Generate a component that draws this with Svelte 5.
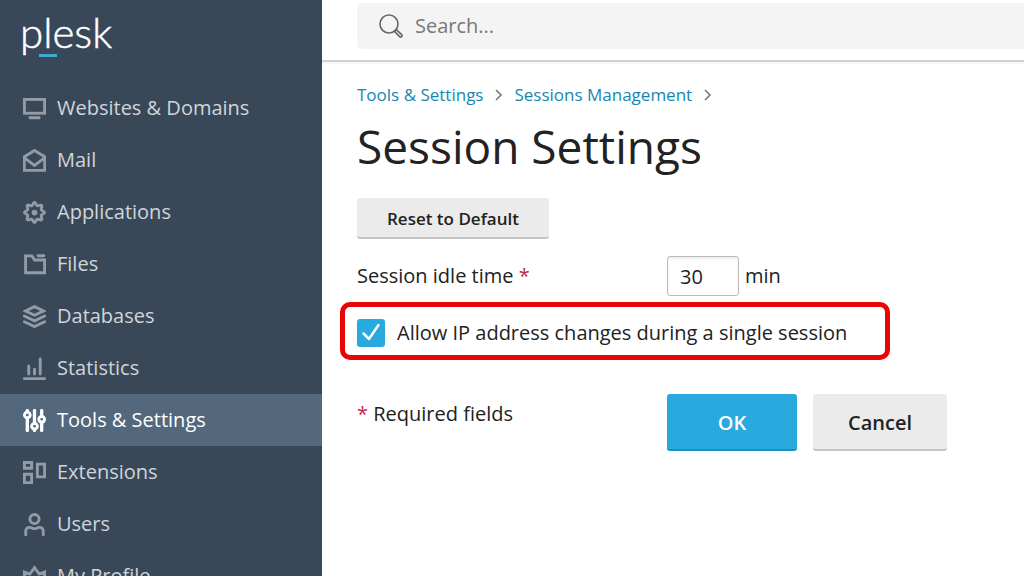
<script>
  const items = [
    { label: 'Websites & Domains', icon: 'monitor' },
    { label: 'Mail', icon: 'mail' },
    { label: 'Applications', icon: 'gear' },
    { label: 'Files', icon: 'folder' },
    { label: 'Databases', icon: 'layers' },
    { label: 'Statistics', icon: 'bars' },
    { label: 'Tools & Settings', icon: 'sliders' },
    { label: 'Extensions', icon: 'blocks' },
    { label: 'Users', icon: 'user' },
    { label: 'My Profile', icon: 'crown' }
  ];
  let active = $state('Tools & Settings');
  let query = $state('');
  let idle = $state('30');
  let allow = $state(true);

  function reset() {
    idle = '30';
    allow = true;
  }
</script>

{#snippet glyph(name)}
  <svg class="glyph" viewBox="0 0 16 16" aria-hidden="true">
    {#if name === 'monitor'}
      <rect x="1" y="1.7" width="14" height="9.6" />
      <path d="M4.8 14.4h6.4" stroke-linecap="round" />
    {:else if name === 'mail'}
      <path d="M.9 5.4 8 1l7.1 4.400v9.500H.900zM1 6.200l7 5.200 7-5.200" />
    {:else if name === 'gear'}
      <path d="M8 1c1 0 1 1.900 1.900 2.300S12.200 2.300 13 3s-.7 2.200-.3 3.100S15 7 15 8s-1.900 1-2.300 1.900S13.700 12.200 13 13s-2.200-.7-3.100-.3S9 15 8 15s-1-1.900-1.900-2.300S3.800 13.700 3 13s.7-2.200.3-3.100S1 9 1 8s1.900-1 2.300-1.900S2.300 3.800 3 3s2.200.7 3.100.3S7 1 8 1z" />
      <circle cx="8" cy="8" r="2" class="solid" />
    {:else if name === 'folder'}
      <path d="M1.800 13.700V2h4.400l1.900 2.900H15v8.800z" />
      <path d="M10.400 1.900H14.500" stroke-linecap="round" />
    {:else if name === 'layers'}
      <path d="M8 1.100 14.400 4.100 8 7.100 1.600 4.100z" />
      <path d="M.9 7.700 8 11l7.100-3.300M.9 11.700 8 15l7.100-3.300" stroke-linecap="round" />
    {:else if name === 'bars'}
      <path d="M.9 15h14.200M4 6.200v5.700M8 8.400v3.500M12 1.300v10.600" stroke-linecap="round" />
    {:else if name === 'sliders'}
      <path d="M3 1.100v1M3 6.300V14.900M8 1.100v8.700M8 14v.9M13 1.100v3.900M13 9.200v5.700" stroke-linecap="round" stroke-width="2.300" />
      <circle cx="3" cy="4.200" r="2" stroke-width="2" />
      <circle cx="8" cy="12" r="2" stroke-width="2" />
      <circle cx="13" cy="7.200" r="2" stroke-width="2" />
    {:else if name === 'blocks'}
      <path d="M1 1h5v4H1zM1 9.200h5V15H1zM10 2.200h5v8.800h-5z" />
    {:else if name === 'user'}
      <circle cx="8" cy="4.200" r="3.200" />
      <path d="M1.900 15.100v-2.200c0-1.700 1.100-2.900 2.800-2.900 1.200 0 1.800.9 3.300.9s2.100-.9 3.300-.9c1.700 0 2.800 1.200 2.800 2.900v2.200" stroke-linecap="round" />
    {:else}
      <path d="M1 14V4.900L4.700 6.300 8 1.800 11.300 6.300 15 4.900V14z" />
      <path d="M5 9.800c1.800-.8 4.200-.8 6 0" stroke-linecap="round" />
    {/if}
  </svg>
{/snippet}

{#snippet chevron()}
  <svg class="chevron" viewBox="0 0 9 14" aria-hidden="true"><path d="M2 2l5 5-5 5" /></svg>
{/snippet}

<div class="app">
  <aside>
    <a class="logo" href="#home">p<span>l</span>esk</a>
    <nav>
      {#each items as item}
        <a
          href={'#' + item.icon}
          class:active={active === item.label}
          aria-current={active === item.label ? 'page' : undefined}
          onclick={() => (active = item.label)}
        >
          {@render glyph(item.icon)}
          {item.label}
        </a>
      {/each}
    </nav>
  </aside>

  <div class="page">
    <header>
      <label class="search">
        <svg viewBox="0 0 24 24" aria-hidden="true">
          <circle cx="10" cy="10" r="9" />
          <path d="M15.600 17.400 17.400 15.600 22.600 20.600a1.400 1.400 0 0 1-2 2z" />
        </svg>
        <input type="search" placeholder="Search..." aria-label="Search" bind:value={query} />
      </label>
    </header>

    <main>
      <div class="crumbs">
        <a href="#tools">Tools &amp; Settings</a>
        {@render chevron()}
        <a href="#sessions">Sessions Management</a>
        {@render chevron()}
      </div>
      <h1>Session Settings</h1>
      <button class="reset" type="button" onclick={reset}>Reset to Default</button>

      <form onsubmit={(e) => e.preventDefault()}>
        <div class="row">
          <label for="idle">Session idle time <b>*</b></label>
          <div class="field">
            <input id="idle" type="text" inputmode="numeric" required bind:value={idle} />
            <span>min</span>
          </div>
        </div>
        <label class="allow">
          <input type="checkbox" bind:checked={allow} />
          <span class="box">
            <svg viewBox="0 0 28 28" aria-hidden="true"><path d="M6.500 14.500l5.500 5.500L21.500 6" /></svg>
          </span>
          Allow IP address changes during a single session
        </label>
        <div class="row actions">
          <p><b>*</b> Required fields</p>
          <div class="buttons">
            <button class="ok" type="submit">OK</button>
            <button class="cancel" type="button">Cancel</button>
          </div>
        </div>
      </form>
    </main>
  </div>
</div>

<style>
  :global(body) {
    overflow: hidden;
  }
  .app {
    display: flex;
    height: 100vh;
    overflow: hidden;
    background: #fff;
    color: #222;
    font: 20px/28px "Open Sans", sans-serif;
  }
  .app * {
    box-sizing: border-box;
  }
  a {
    text-decoration: none;
  }
  svg {
    flex: none;
    fill: none;
    stroke: currentColor;
  }
  aside {
    flex: none;
    width: 322px;
    overflow: hidden;
    background: #394859;
  }
  .logo {
    display: block;
    height: 82px;
    padding: 8px 20px;
    color: #fff;
    font: 300 42px/48px Lato, sans-serif;
    -webkit-text-stroke: 0.5px #fff;
  }
  .logo span {
    position: relative;
  }
  .logo span::after {
    content: "";
    position: absolute;
    left: -4px;
    bottom: 0;
    width: 18px;
    height: 3px;
    background: #43a9cf;
  }
  nav a {
    display: flex;
    align-items: center;
    gap: 11px;
    height: 52px;
    padding: 0 23px;
    color: #d0d5d9;
  }
  nav a.active {
    background: #53687c;
    color: #fff;
  }
  .glyph {
    width: 23px;
    height: 23px;
    color: #929ba6;
    stroke-width: 2;
  }
  .active .glyph {
    color: #fff;
  }
  .solid {
    fill: currentColor;
    stroke: none;
  }
  .page {
    flex: 1;
    min-width: 0;
  }
  header {
    padding: 3px 0 11px 35px;
    border-bottom: 2px solid #d2d3d8;
    box-shadow: 0 1px 2px #0001;
  }
  .search {
    display: flex;
    align-items: center;
    gap: 12px;
    height: 46px;
    padding: 0 22px;
    background: #f4f4f4;
    border-radius: 5px 0 0 5px;
    color: #666;
  }
  .search svg {
    width: 24px;
    height: 24px;
    stroke-width: 1.6;
  }
  .search input {
    flex: 1;
    min-width: 0;
    padding: 0;
    border: 0;
    outline: 0;
    background: none;
    font: inherit;
    color: #222;
  }
  .search input::placeholder {
    color: #777;
    opacity: 1;
  }
  main {
    padding: 21px 35px;
  }
  .crumbs {
    display: flex;
    align-items: center;
    gap: 11px;
    font-size: 17px;
    line-height: 24px;
  }
  .crumbs a {
    color: #1686b0;
  }
  .chevron {
    width: 9px;
    height: 14px;
    color: #777;
    stroke-width: 1.6;
  }
  h1 {
    margin: 7px 0 20px;
    font-size: 46px;
    line-height: 64px;
    font-weight: 400;
  }
  button {
    border: 0;
    border-bottom: 2px solid #c4c4c4;
    border-radius: 3px;
    background: #ebebeb;
    color: #222;
    font: 600 20px/28px "Open Sans", sans-serif;
    cursor: pointer;
  }
  .reset {
    display: block;
    height: 41px;
    padding: 2px 30px 0;
    font-size: 17px;
  }
  .row {
    display: grid;
    grid-template-columns: 310px 1fr;
  }
  form > .row:first-child {
    align-items: center;
    margin-top: 17px;
  }
  b {
    color: #c1284f;
    font-weight: 400;
  }
  .field {
    display: flex;
    align-items: center;
    gap: 6px;
  }
  .field input {
    width: 72px;
    height: 40px;
    padding: 0 12px;
    border: 1px solid #bbb;
    border-radius: 3px;
    box-shadow: inset 0 2px 3px #0001;
    background: #fff;
    color: #222;
    font: inherit;
  }
  .allow {
    display: flex;
    align-items: center;
    gap: 12px;
    width: fit-content;
    height: 58px;
    margin: 6px 0 0 -17px;
    padding: 4px 38px 0 12px;
    border: 5px solid #e80505;
    border-radius: 10px;
    white-space: nowrap;
  }
  .allow input {
    position: absolute;
    opacity: 0;
  }
  .box {
    display: grid;
    width: 28px;
    height: 28px;
    border-radius: 3px;
    background: #e4e4e4;
    color: transparent;
  }
  input:checked + .box {
    background: #28aade;
    color: #fff;
  }
  .box svg {
    stroke-width: 2.5;
    stroke-linecap: round;
    stroke-linejoin: round;
  }
  .actions {
    margin-top: 34px;
  }
  .actions p {
    margin: 6px 0 0;
  }
  .buttons {
    display: flex;
    gap: 16px;
  }
  .buttons button {
    height: 57px;
    padding-top: 3px;
  }
  .ok {
    width: 130px;
    background: #28aade;
    border-color: #1d8fbd;
    color: #fff;
  }
  .cancel {
    width: 134px;
  }
</style>
